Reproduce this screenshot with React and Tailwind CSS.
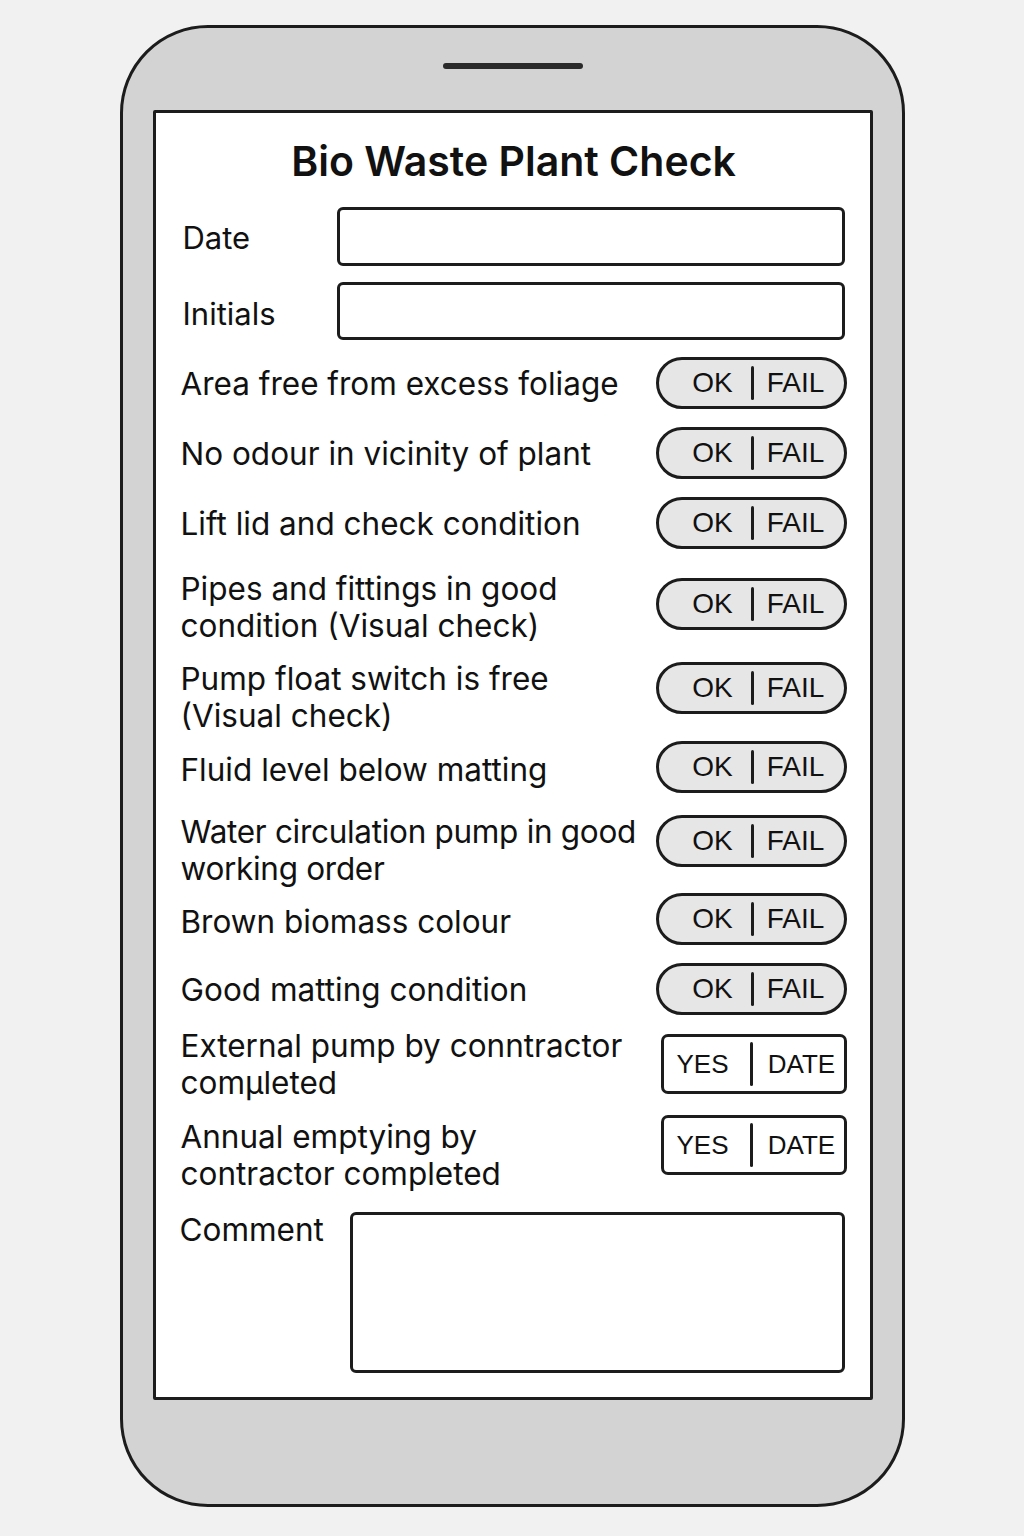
import React from 'react';

const checks = [
	{ label: ['Area free from excess foliage'], h: 'h-[70px]', kind: 'ok', pt: '' },
	{ label: ['No odour in vicinity of plant'], h: 'h-[70px]', kind: 'ok', pt: '' },
	{ label: ['Lift lid and check condition'], h: 'h-[70px]', kind: 'ok', pt: '' },
	{ label: ['Pipes and fittings in good', 'condition (Visual check)'], h: 'h-[92px]', kind: 'ok', pt: 'pt-[6px]' },
	{ label: ['Pump float switch is free', '(Visual check)'], h: 'h-[76px]', kind: 'ok', pt: 'pt-[18px]' },
	{ label: ['Fluid level below matting'], h: 'h-[82px]', kind: 'ok', pt: 'pt-[4px]' },
	{ label: ['Water circulation pump in good', 'working order'], h: 'h-[66px]', kind: 'ok', pt: 'pt-[18px] tracking-[-0.3px]' },
	{ label: ['Brown biomass colour'], h: 'h-[90px]', kind: 'ok', pt: 'pt-[4px]' },
	{ label: ['Good matting condition'], h: 'h-[50px]', kind: 'ok', pt: '' },
	{ label: ['External pump by conntractor', 'comµleted'], h: 'h-[100px]', kind: 'yes', pt: '' },
	{ label: ['Annual emptying by', 'contractor completed'], h: 'h-[62px]', kind: 'yes', pt: 'pt-[20px]' },
];

const OkFail = () => (
	<div className="flex items-center w-[191px] h-[52px] rounded-full border-[3px] border-[#1c1c1c] bg-[#e6e6e6] text-[28px] text-[#111] font-['Liberation_Sans',Arial,sans-serif]">
		<span className="w-[92px] pl-[16px] text-center">OK</span>
		<span className="w-[3px] h-[34px] rounded-full bg-[#1c1c1c]"></span>
		<span className="flex-1 pr-[6px] text-center">FAIL</span>
	</div>
);

const YesDate = () => (
	<div className="flex items-center w-[186px] h-[60px] rounded-[7px] border-[3px] border-[#1c1c1c] bg-white text-[26px] text-[#111] font-['Liberation_Sans',Arial,sans-serif]">
		<span className="w-[86px] pr-[8px] text-center">YES</span>
		<span className="w-[3px] h-[44px] rounded-full bg-[#1c1c1c]"></span>
		<span className="flex-1 pl-[7px] text-center">DATE</span>
	</div>
);

const App = () => {
	return (
		<div className="min-h-screen bg-[#f1f1f1] pt-[25px] pb-[29px] font-['Inter',sans-serif] text-[#111]">
			{/* Phone body */}
			<div className="ml-[120px] w-[785px] h-[1482px] rounded-[88px] border-[3px] border-[#1c1c1c] bg-[#d3d3d3] flex flex-col items-center">
				<div className="mt-[35px] w-[140px] h-[6px] rounded-full bg-[#2a2a2a]"></div>

				{/* Screen */}
				<div className="mt-[41px] w-[720px] h-[1290px] rounded-[2px] border-[3px] border-[#1c1c1c] bg-white pl-[25px] pr-[23px]">
					<div className="h-[85px] pt-3 flex items-center justify-center">
						<h1 className="text-[41px] font-semibold">Bio Waste Plant Check</h1>
					</div>

					{/* Date / Initials */}
					<div className="flex items-center h-[76px]">
						<span className="w-[156px] pl-[2px] pt-[4px] text-[31px]">Date</span>
						<div className="flex-1 mr-[2px] h-[59px] rounded-[6px] border-[3px] border-[#1c1c1c]"></div>
					</div>
					<div className="flex items-center h-[74px]">
						<span className="w-[156px] pl-[2px] pt-[6px] text-[31px]">Initials</span>
						<div className="flex-1 mr-[2px] h-[58px] rounded-[6px] border-[3px] border-[#1c1c1c]"></div>
					</div>

					{/* Checklist */}
					{checks.map((c) => (
						<div key={c.label[0]} className={`flex items-center justify-between ${c.h}`}>
							<div className={`text-[31.5px] leading-[37px] whitespace-nowrap ${c.pt}`}>
								{c.label.map((line) => (
									<div key={line}>{line}</div>
								))}
							</div>
							{c.kind === 'ok' ? <OkFail /> : <YesDate />}
						</div>
					))}

					{/* Comment */}
					<div className="flex items-start mt-[36px]">
						<span className="w-[170px] text-[31.5px] leading-[36px] -ml-[1px]">Comment</span>
						<div className="flex-1 mr-[2px] h-[161px] rounded-[6px] border-[3px] border-[#1c1c1c]"></div>
					</div>
				</div>
			</div>
		</div>
	);
};

export default App;
